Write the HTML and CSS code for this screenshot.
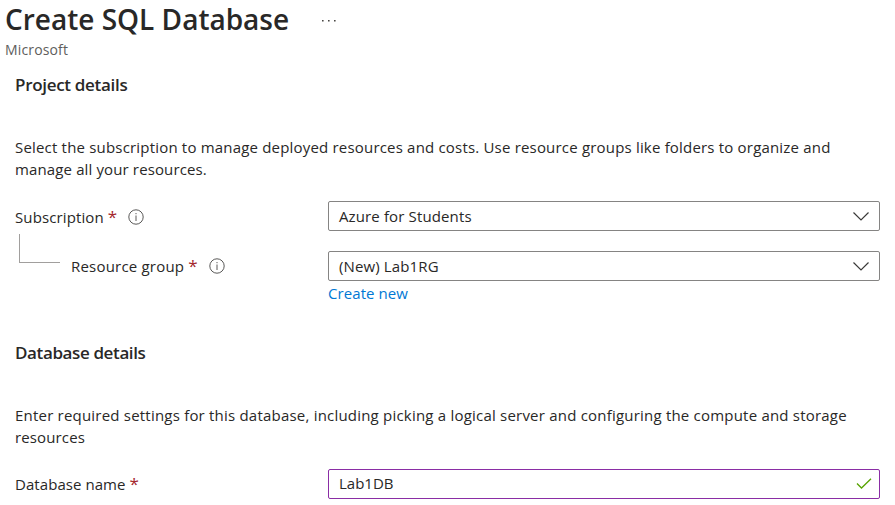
FILE: index.html
```html
<!DOCTYPE html>
<html lang="en">
<head>
<meta charset="utf-8">
<title>Create SQL Database</title>
<link rel="stylesheet" href="styles.css">
</head>
<body>
<header>
  <div class="title-row">
    <h1>Create SQL Database</h1>
    <svg class="more" width="16" height="4" viewBox="0 0 16 4"><path d="M1 1h1.600v1.600H1zM7 1h1.600v1.600H7zM13 1h1.600v1.600h-1.600z" fill="#484644"/></svg>
  </div>
  <p class="publisher">Microsoft</p>
</header>
<main>
  <section class="project">
    <h2>Project details</h2>
    <p class="intro">Select the subscription to manage deployed resources and costs. Use resource groups like folders to organize and<br><span class="short">manage all your resources.</span></p>
    <div class="field">
      <div class="label"><span>Subscription</span><span class="req">*</span>
        <svg class="info" width="16" height="16" viewBox="0 0 16 16" fill="none" stroke="#5a5958"><circle cx="8" cy="8" r="7.200"/><path d="M8 6.500V12M8 4v1.200"/></svg></div>
      <div class="control"><span>Azure for Students</span><svg width="18" height="10" viewBox="0 0 18 10" fill="none" stroke="#3b3a39" stroke-width="1.2"><path d="M1.500 1.500L9 9l7.500-7.500"/></svg></div>
    </div>
    <div class="field">
      <div class="label group"><i class="branch"></i><span>Resource group</span><span class="req">*</span>
        <svg class="info" width="16" height="16" viewBox="0 0 16 16" fill="none" stroke="#5a5958"><circle cx="8" cy="8" r="7.200"/><path d="M8 6.500V12M8 4v1.200"/></svg></div>
      <div class="control"><span>(New) Lab1RG</span><svg width="18" height="10" viewBox="0 0 18 10" fill="none" stroke="#3b3a39" stroke-width="1.2"><path d="M1.500 1.500L9 9l7.500-7.500"/></svg></div>
    </div>
    <a class="create">Create new</a>
  </section>
  <section class="database">
    <h2 class="tight">Database details</h2>
    <p class="intro wide">Enter required settings for this database, including picking a logical server and configuring the compute and storage<br><span class="short">resources</span></p>
    <div class="field">
      <div class="label db"><span>Database name</span><span class="req">*</span></div>
      <div class="control active"><span class="name">Lab1DB</span><svg width="16" height="12" viewBox="0 0 16 12" fill="none" stroke="#57a300" stroke-width="1.3"><path d="M1 5.500l4.500 4.500L15 .8"/></svg></div>
    </div>
  </section>
</main>
</body>
</html>
```
FILE: styles.css
```css
* { box-sizing: border-box; }
body { margin: 0; width: 895px; height: 505px; overflow: hidden; background: #fff; color: #292827; font: 15px/22px "Open Sans", "Noto Sans", sans-serif; }
h1, h2, p { margin: 0; }
header { height: 74px; padding-left: 5px; }
.title-row { display: flex; height: 39px; }
h1 { width: 316px; font-size: 28px; line-height: 39px; font-weight: 600; white-space: nowrap; }
.more { margin-top: 19px; }
.publisher { color: #605e5c; font-size: 14px; line-height: 22px; letter-spacing: .15px; }
main { padding: 0 15px; }
h2 { font-size: 17px; line-height: 22px; font-weight: 600; letter-spacing: -.31px; }
.tight { letter-spacing: -.38px; }
.intro { margin-top: 40px; white-space: nowrap; letter-spacing: .188px; }
.wide { letter-spacing: .209px; }
.short { letter-spacing: .13px; }
.field { display: flex; align-items: center; height: 30px; margin-top: 20px; }
.intro + .field { margin-top: 21px; }
.label { width: 313px; display: flex; align-items: center; height: 30px; padding-top: 1px; white-space: nowrap; letter-spacing: .12px; }
.group { letter-spacing: .2px; padding-top: 0; }
.db { letter-spacing: .06px; padding-top: 0; }
.control { width: 552px; height: 30px; display: flex; align-items: center; justify-content: space-between; border: 1px solid #858483; border-radius: 2px; padding: 0 9px 0 10px; letter-spacing: .13px; }
.req { color: #a4262c; margin-left: 4px; font-size: 17px; }
.info { margin-left: 11px; }
.branch { width: 41px; height: 29px; margin: -36px 11px 0 4px; border: solid #a19f9d; border-width: 0 0 1px 1px; }
.create { display: block; margin: 1px 0 0 313px; color: #0078d4; letter-spacing: .08px; }
.database { margin-top: 38px; }
.active { border-color: #8a2da5; padding-right: 7px; }
.active svg { margin-top: -1px; }
.name { margin-top: -2px; letter-spacing: 0; }
```
